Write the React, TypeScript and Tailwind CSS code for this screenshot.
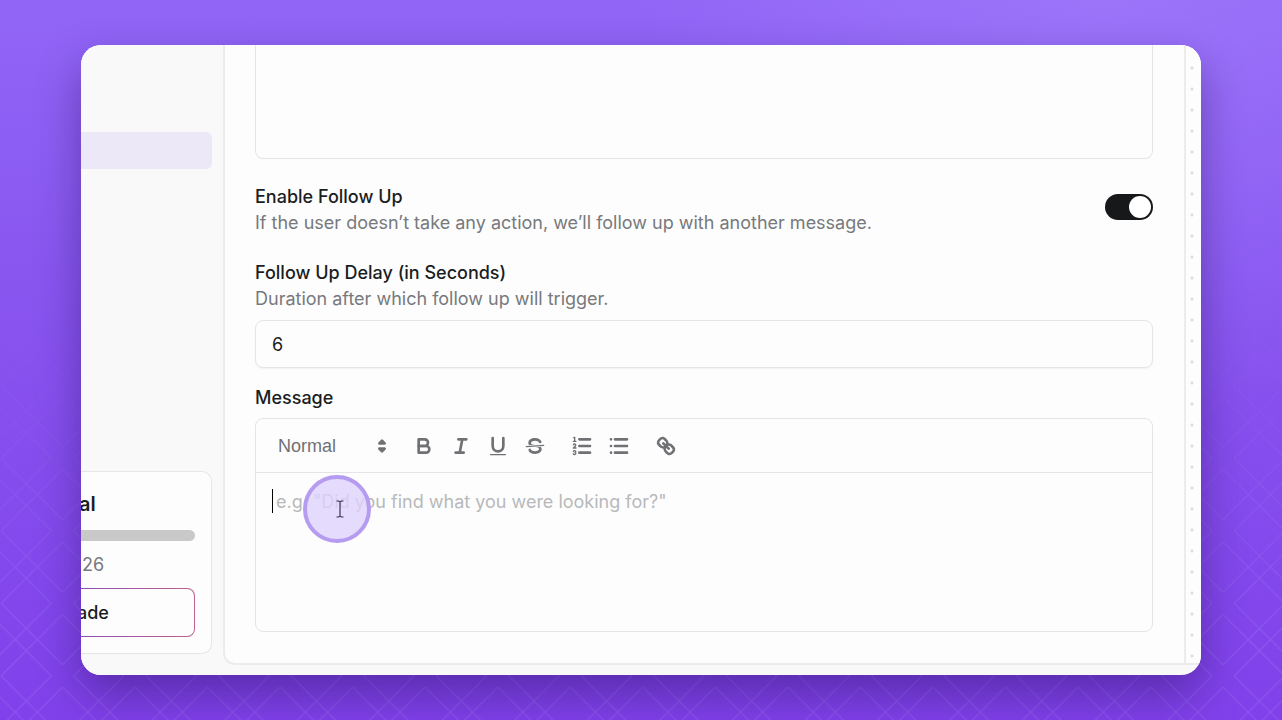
import type { ReactNode } from 'react';

const TOOLBAR_GROUPS = [
  [
    { label: 'Bold', icon: <BoldIcon /> },
    { label: 'Italic', icon: <ItalicIcon /> },
    { label: 'Underline', icon: <UnderlineIcon /> },
    { label: 'Strike', icon: <StrikeIcon /> },
  ],
  [
    { label: 'Ordered list', icon: <OrderedListIcon /> },
    { label: 'Bullet list', icon: <BulletListIcon /> },
  ],
  [{ label: 'Link', icon: <LinkIcon /> }],
];

function ToolbarSvg({ children }: { children: ReactNode }) {
  return (
    <svg
      viewBox="0 0 18 18"
      className="size-6"
      fill="none"
      stroke="currentColor"
      strokeWidth={2}
      strokeLinecap="round"
      strokeLinejoin="round"
      aria-hidden="true"
    >
      {children}
    </svg>
  );
}

function PickerIcon() {
  return (
    <ToolbarSvg>
      <polygon points="7 11 9 13 11 11 7 11" />
      <polygon points="7 7 9 5 11 7 7 7" />
    </ToolbarSvg>
  );
}

function BoldIcon() {
  return (
    <ToolbarSvg>
      <path d="M5,4H9.5A2.5,2.5,0,0,1,12,6.5v0A2.5,2.5,0,0,1,9.5,9H5V4Z" />
      <path d="M5,9h5.5A2.5,2.5,0,0,1,13,11.5v0A2.5,2.5,0,0,1,10.5,14H5V9Z" />
    </ToolbarSvg>
  );
}

function ItalicIcon() {
  return (
    <ToolbarSvg>
      <path d="M7 4H13M5 14H11M8 14L10 4" />
    </ToolbarSvg>
  );
}

function UnderlineIcon() {
  return (
    <ToolbarSvg>
      <path d="M5,3V9a4.012,4.012,0,0,0,4,4H9a4.012,4.012,0,0,0,4-4V3" />
      <rect
        x="3"
        y="15"
        width="12"
        height="1"
        rx="0.5"
        fill="currentColor"
        stroke="none"
      />
    </ToolbarSvg>
  );
}

function StrikeIcon() {
  return (
    <ToolbarSvg>
      <path strokeWidth={1} d="M15.5 8.5L2.5 9.5" />
      <g fill="currentColor" stroke="none">
        <path d="M9.007,8C6.542,7.791,6,7.519,6,6.5,6,5.792,7.283,5,9,5c1.571,0,2.765.679,2.969,1.309a1,1,0,0,0,1.9-.617C13.356,4.106,11.354,3,9,3,6.2,3,4,4.538,4,6.5a3.2,3.2,0,0,0,.5,1.843Z" />
        <path d="M8.984,10C11.457,10.208,12,10.479,12,11.5c0,0.708-1.283,1.5-3,1.5-1.571,0-2.765-.679-2.969-1.309a1,1,0,1,0-1.9.617C4.644,13.894,6.646,15,9,15c2.8,0,5-1.538,5-3.5a3.2,3.2,0,0,0-.5-1.843Z" />
      </g>
    </ToolbarSvg>
  );
}

function OrderedListIcon() {
  return (
    <ToolbarSvg>
      <path d="M7 4H15M7 9H15M7 14H15" />
      <path
        fill="currentColor"
        stroke="none"
        d="M3.5,6A0.5,0.5,0,0,1,3,5.5V3.085l-0.276.138A0.5,0.5,0,0,1,2.053,3c-0.124-.247-0.023-0.324.224-0.447l1-.5A0.5,0.5,0,0,1,4,2.5v3A0.5,0.5,0,0,1,3.5,6Z"
      />
      <g strokeWidth={1}>
        <path d="M2.5 5.5H4.5" />
        <path d="M4.5,10.5h-2c0-.234,1.85-1.076,1.85-2.234A0.959,0.959,0,0,0,2.5,8.156" />
        <path d="M2.5,14.846a0.959,0.959,0,0,0,1.85-.109A0.7,0.7,0,0,0,3.75,14a0.688,0.688,0,0,0,.6-0.736,0.959,0.959,0,0,0-1.85-.109" />
      </g>
    </ToolbarSvg>
  );
}

function BulletListIcon() {
  return (
    <ToolbarSvg>
      <path d="M6 4H15M6 9H15M6 14H15M3 4H3.01M3 9H3.01M3 14H3.01" />
    </ToolbarSvg>
  );
}

function LinkIcon() {
  return (
    <ToolbarSvg>
      <path d="M7 7L11 11" />
      <path d="M8.9,4.577a3.476,3.476,0,0,1,.36,4.679A3.476,3.476,0,0,1,4.577,8.9C3.185,7.5,2.035,6.4,4.217,4.217S7.5,3.185,8.9,4.577Z" />
      <path d="M13.423,9.1a3.476,3.476,0,0,0-4.679-.36,3.476,3.476,0,0,0,.36,4.679c1.392,1.392,2.5,2.542,4.679.36S14.815,10.5,13.423,9.1Z" />
    </ToolbarSvg>
  );
}

function Backdrop() {
  return (
    <svg
      className="absolute inset-0 size-full bg-[radial-gradient(circle_at_86%_-5%,#a684ff80,transparent_35%)]"
      aria-hidden="true"
    >
      <defs>
        <pattern
          id="lattice"
          width="72"
          height="72"
          patternUnits="userSpaceOnUse"
          patternTransform="translate(62.5 23) scale(1.0075)"
        >
          <path
            d="M72 11L11 72M61 0L0 61M11 0L72 61M0 11L61 72"
            stroke="#b79bff"
            strokeOpacity="0.2"
            strokeWidth="1.3"
          />
        </pattern>
        <linearGradient id="fade" x1="0" y1="0" x2="0" y2="1">
          <stop offset="0.4" stopColor="#000" />
          <stop offset="0.9" stopColor="#fff" />
        </linearGradient>
        <mask id="lattice-mask">
          <rect width="100%" height="100%" fill="url(#fade)" />
        </mask>
      </defs>
      <rect
        width="100%"
        height="100%"
        fill="url(#lattice)"
        mask="url(#lattice-mask)"
      />
    </svg>
  );
}

function Sidebar() {
  return (
    <aside className="flex w-[142px] shrink-0 flex-col bg-[#f9f9f9] pt-[87px] pr-[11px] pb-[21px]">
      <div className="h-[37px] rounded-r-md bg-[#ece8f8]" />

      <div className="mt-auto rounded-r-[10px] border border-l-0 border-[#e6e6e6] bg-[#fdfdfd] pt-[18px] pr-4 pb-4">
        <p className="-ml-0.5 text-xl leading-7 font-semibold text-[#1b1d1f]">
          al
        </p>
        <div className="mt-3 h-[11px] rounded-r-full bg-[#c9c9c9]" />
        <p className="mt-[11px] pl-px text-lg leading-[26px] text-[#77797c]">
          26
        </p>
        <div className="mt-2.5 rounded-r-lg bg-linear-to-r from-[#8b4fae] to-[#c0608c] py-px pr-px">
          <button
            type="button"
            className="-ml-1 block h-[47px] w-[calc(100%+4px)] rounded-r-[7px] bg-[#fdfdfd] text-left text-lg font-medium text-[#1b1d1f]"
          >
            ade
          </button>
        </div>
      </div>
    </aside>
  );
}

function FollowUpToggle() {
  return (
    <div className="flex items-start justify-between">
      <div className="leading-[26px]">
        <label htmlFor="follow-up" className="block font-medium">
          Enable Follow Up
        </label>
        <p className="text-[#77797c]">
          If the user doesn’t take any action, we’ll follow up with another
          message.
        </p>
      </div>
      <input
        id="follow-up"
        type="checkbox"
        role="switch"
        defaultChecked
        className="mt-2.5 flex h-[26px] w-12 shrink-0 appearance-none items-center justify-start rounded-full bg-[#c9c9c9] p-0.5 before:size-[22px] before:rounded-full before:bg-white checked:justify-end checked:bg-[#17181a]"
      />
    </div>
  );
}

function MessageEditor() {
  return (
    <div className="mt-[7px] rounded-lg border border-[#e5e5e5]">
      <div className="flex h-[54px] items-center border-b border-[#e5e5e5] pl-[22px] text-[#6f7174]">
        <div className="relative flex items-center">
          <select
            aria-label="Text style"
            className="w-[120px] appearance-none font-['Liberation_Sans',Arial,sans-serif] outline-none"
          >
            <option>Normal</option>
          </select>
          <span className="pointer-events-none absolute top-1/2 right-1 -translate-y-1/2">
            <PickerIcon />
          </span>
        </div>
        <div className="ml-[7px] flex gap-2.5">
          {TOOLBAR_GROUPS.map((group) => (
            <div key={group[0].label} className="flex">
              {group.map(({ label, icon }) => (
                <button
                  key={label}
                  type="button"
                  aria-label={label}
                  className="flex w-[37px] justify-center"
                >
                  {icon}
                </button>
              ))}
            </div>
          ))}
        </div>
      </div>

      <div className="relative">
        <textarea
          id="message"
          placeholder={'e.g. "Did you find what you were looking for?"'}
          className="block h-[158px] w-full resize-none px-5 py-[17px] leading-6 outline-none placeholder:text-[#b7b9bb]"
        />
        <span className="absolute top-4 left-4 h-6 w-px bg-black" />
        <Pointer />
      </div>
    </div>
  );
}

function Pointer() {
  return (
    <div className="absolute top-0.5 left-[47px] flex size-[68px] items-center justify-center rounded-full border-4 border-[#b69cf0] bg-[#dfd2fc]/80">
      <svg
        viewBox="0 0 10 18"
        className="ml-1.5 h-[18px] w-2.5"
        fill="none"
        stroke="#3d3350"
        strokeWidth="1.2"
        aria-hidden="true"
      >
        <path d="M1.5 1H3.5L5 2L6.5 1H8.5M5 2V16M1.5 17H3.5L5 16L6.5 17H8.5" />
      </svg>
    </div>
  );
}

export default function App() {
  return (
    <div className="relative flex min-h-screen bg-linear-to-b from-[#9166f6] via-[#8853ef] via-45% to-[#8041ea] px-[81px] py-[45px] font-['Inter',sans-serif]">
      <Backdrop />

      <div className="relative flex flex-1 overflow-hidden rounded-[20px] bg-[#f9f9f9] shadow-[0_20px_44px_rgba(30,10,80,0.4)]">
        <Sidebar />

        <div className="mb-2.5 flex flex-1 rounded-bl-xl border-b-2 border-l-2 border-[#ececec] bg-[#fdfdfd]">
          <main className="flex-1 px-[30px] pr-[31px] pb-[30px] text-lg text-[#1b1d1f]">
            <div className="h-[114px] rounded-b-lg border border-t-0 border-[#e5e5e5]" />

            <div className="mt-[25px]">
              <FollowUpToggle />
            </div>

            <div className="mt-6 leading-[26px]">
              <label htmlFor="delay" className="block font-medium">
                Follow Up Delay (in Seconds)
              </label>
              <p className="text-[#77797c]">
                Duration after which follow up will trigger.
              </p>
              <input
                id="delay"
                type="text"
                inputMode="numeric"
                defaultValue="6"
                className="mt-2 block h-12 w-full rounded-lg border border-[#e5e5e5] px-4 shadow-xs outline-none"
              />
            </div>

            <label
              htmlFor="message"
              className="mt-[17px] block leading-[26px] font-medium"
            >
              Message
            </label>
            <MessageEditor />
          </main>

          <div className="w-[17px] border-l-2 border-[#ececec] bg-[radial-gradient(circle_at_6px_2px,#dedede_1px,transparent_2px)] bg-size-[21px_21px]" />
        </div>
      </div>
    </div>
  );
}
